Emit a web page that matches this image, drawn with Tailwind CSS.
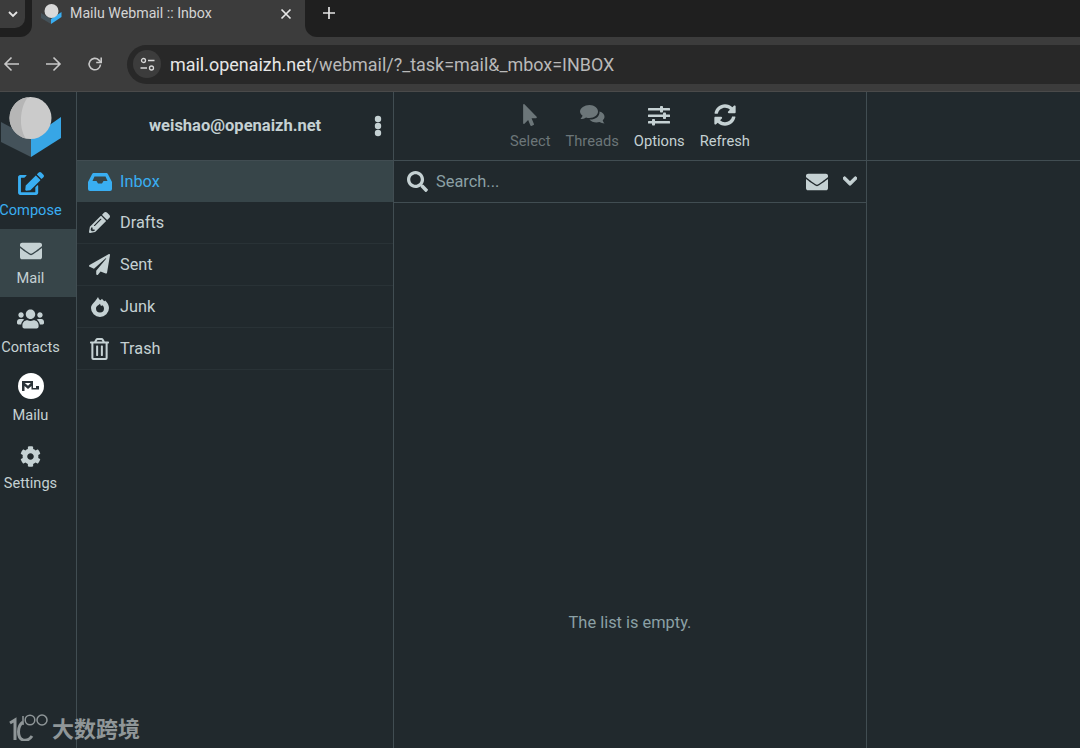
<!DOCTYPE html>
<html lang="en">
<head>
  <meta charset="UTF-8" />
  <title>Mailu Webmail :: Inbox</title>
  <script src="https://cdn.jsdelivr.net/npm/@tailwindcss/browser@4"></script>
</head>
<body class="relative w-[1080px] h-[748px] overflow-hidden bg-[#21292d] text-[#c5d1d3] font-['Roboto',sans-serif]">

  <!-- browser tabs -->
  <div class="h-[37px] bg-[#3c3c3c] flex">
    <div class="w-[32px] bg-[#1f1f1f] rounded-br-[12px]">
      <div class="w-[25px] h-[28px] bg-[#3c3c3c] rounded-br-[10px] flex items-center justify-center">
        <svg class="w-[12px] h-[12px] text-[#e3e3e3]" viewBox="0 0 12 12" fill="none" stroke="currentColor" stroke-width="1.800"><path d="M2 4l4 4 4-4"/></svg>
      </div>
    </div>
    <div class="w-[273px] flex items-center pl-[9px] pr-[13px] pb-[10px]">
      <svg class="w-[21px] h-[20px] shrink-0" viewBox="0 0 21 20">
        <path d="M0 9l10 6v5L0 14z" fill="#44525a"/>
        <path d="M20.500 8L10 15v5l10.500-7z" fill="#39aef2"/>
        <circle cx="10.500" cy="7" r="7" fill="#d9d9d9"/>
      </svg>
      <span class="ml-[8px] text-[14.2px] text-[#d4d4d4] whitespace-nowrap">Mailu Webmail :: Inbox</span>
      <svg class="ml-auto w-[12px] h-[12px] text-[#e6e6e6]" viewBox="0 0 12 12" fill="none" stroke="currentColor" stroke-width="1.700"><path d="M1.500 1.500l9 9M10.500 1.500l-9 9"/></svg>
    </div>
    <div class="flex-1 bg-[#1f1f1f] rounded-bl-[12px] pl-[18px] pt-[7px]">
      <svg class="w-[12px] h-[12px] text-[#e3e3e3]" viewBox="0 0 12 12" fill="none" stroke="currentColor" stroke-width="1.700"><path d="M6 0v12M0 6h12"/></svg>
    </div>
  </div>

  <!-- address bar -->
  <div class="h-[55px] bg-[#3c3c3c] border-b border-[#4a4a4a] flex items-center">
    <svg class="ml-[3px] w-[18px] h-[18px] text-[#c8c8c8]" viewBox="0 0 18 18" fill="none" stroke="currentColor" stroke-width="1.600"><path d="M16 9H2M8.500 2.500L2 9l6.500 6.500"/></svg>
    <svg class="ml-[23px] w-[18px] h-[18px] text-[#c8c8c8]" viewBox="0 0 18 18" fill="none" stroke="currentColor" stroke-width="1.600"><path d="M2 9h14M9.500 2.500L16 9l-6.500 6.500"/></svg>
    <svg class="ml-[25px] w-[16px] h-[16px] text-[#c8c8c8]" viewBox="0 0 16 16" fill="none" stroke="currentColor" stroke-width="1.600"><path d="M13.500 8.500a5.700 5.700 0 1 1-1.600-4.400L14 6.200"/><path d="M14.200 1.500v5h-5" /></svg>
    <div class="ml-[24px] flex-1 h-[39px] bg-[#282828] rounded-l-full flex items-center pl-[6px]">
      <div class="w-[28px] h-[28px] rounded-full bg-[#3c3c3c] flex items-center justify-center">
        <svg class="w-[15px] h-[15px] text-[#d8d8d8]" viewBox="0 0 15 15" fill="none" stroke="currentColor" stroke-width="1.300"><circle cx="3.500" cy="3.500" r="2"/><path d="M8 3.500h6.500M.5 11h6.500"/><circle cx="11.500" cy="11" r="2"/></svg>
      </div>
      <div class="ml-[9px] mt-[2px] text-[17.96px] whitespace-nowrap text-[#b9b9b9]"><span class="text-[#e6e6e6]">mail.openaizh.net</span>/webmail/?_task=mail&amp;_mbox=INBOX</div>
    </div>
  </div>

  <!-- webmail -->
  <div class="flex h-[656px]">

    <!-- task menu -->
    <div class="w-[77px] shrink-0 border-r border-[#414d52] flex flex-col text-[14.6px]">
      <div class="h-[69px] shrink-0">
        <svg class="w-[62px] h-[69px]" viewBox="0 0 62 69">
          <path d="M1 30l30 16v19L1 50z" fill="#44525a"/>
          <path d="M61 25L31 46v19l30-19z" fill="#37a6e6"/>
          <circle cx="30.500" cy="26" r="21" fill="#cbcbcb"/>
          <path d="M28 5.200a21 21 0 0 0-18.500 21 21 21 0 0 0 16 20.200c-3.500-6-5-13-4.500-20.400S23.500 10 28 5.200z" fill="#b6b6b6"/>
        </svg>
      </div>
      <div class="h-[68px] shrink-0 pr-[15px] flex flex-col items-center text-[#39aef2]">
        <svg class="mt-[11px] w-[26px] h-[23px]" viewBox="0 0 576 512" fill="currentColor"><path d="M402.6 83.2l90.2 90.2c3.8 3.8 3.8 10 0 13.8L274.4 405.6l-92.8 10.3c-12.4 1.4-22.9-9.1-21.500-21.500l10.300-92.800L388.800 83.200c3.800-3.800 10-3.800 13.800 0zm162-22.900l-48.800-48.800c-15.200-15.200-39.900-15.200-55.200 0l-35.400 35.400c-3.800 3.800-3.800 10 0 13.800l90.200 90.200c3.800 3.800 10 3.800 13.800 0l35.400-35.400c15.200-15.300 15.200-40 0-55.200zM384 346.200V448H64V128h73.900c3.200 0 6.200-1.300 8.500-3.500l40-40c7.600-7.600 2.200-20.500-8.500-20.500H48C21.500 64 0 85.500 0 112v352c0 26.500 21.500 48 48 48h352c26.500 0 48-21.500 48-48V306.200c0-10.700-12.900-16-20.500-8.500l-40 40c-2.200 2.300-3.500 5.300-3.500 8.500z"/></svg>
        <span class="mt-[7px] leading-[16px]">Compose</span>
      </div>
      <div class="h-[68px] shrink-0 pr-[15px] flex flex-col items-center bg-[#374549]">
        <svg class="mt-[11px] w-[22px] h-[22px]" viewBox="0 0 512 512" fill="currentColor"><path d="M502.300 190.800c3.900-3.100 9.700-.2 9.700 4.700V400c0 26.500-21.500 48-48 48H48c-26.500 0-48-21.500-48-48V195.600c0-5 5.700-7.800 9.700-4.700 22.400 17.400 52.100 39.500 154.100 113.600 21.100 15.400 56.700 47.800 92.200 47.600 35.700.3 72-32.800 92.300-47.600 102-74.100 131.600-96.300 154-113.700zM256 320c23.200.4 56.600-29.200 73.400-41.400 132.700-96.300 142.800-104.700 173.400-128.700 5.800-4.500 9.200-11.500 9.200-18.900v-19c0-26.500-21.500-48-48-48H48C21.500 64 0 85.500 0 112v19c0 7.400 3.400 14.300 9.200 18.900 30.600 23.900 40.700 32.400 173.400 128.700 16.800 12.200 50.200 41.800 73.400 41.400z"/></svg>
        <span class="mt-[8px] leading-[16px]">Mail</span>
      </div>
      <div class="h-[68px] shrink-0 pr-[15px] flex flex-col items-center">
        <svg class="mt-[11px] w-[27px] h-[22px]" viewBox="0 0 640 512" fill="currentColor"><path d="M96 224c35.300 0 64-28.700 64-64s-28.700-64-64-64-64 28.700-64 64 28.700 64 64 64zm448 0c35.300 0 64-28.700 64-64s-28.700-64-64-64-64 28.700-64 64 28.700 64 64 64zm32 32h-64c-17.600 0-33.500 7.100-45.100 18.600 40.300 22.100 68.900 62 75.100 109.400h66c17.700 0 32-14.300 32-32v-32c0-35.300-28.700-64-64-64zm-256 0c61.900 0 112-50.100 112-112S381.900 32 320 32 208 82.100 208 144s50.100 112 112 112zm76.800 32h-8.300c-20.800 10-43.900 16-68.500 16s-47.600-6-68.500-16h-8.300C179.600 288 128 339.600 128 403.200V432c0 26.500 21.500 48 48 48h288c26.500 0 48-21.500 48-48v-28.800c0-63.600-51.600-115.200-115.200-115.200zm-223.700-13.400C161.500 263.100 145.600 256 128 256H64c-35.300 0-64 28.700-64 64v32c0 17.700 14.300 32 32 32h65.900c6.300-47.400 34.900-87.300 75.200-109.400z"/></svg>
        <span class="mt-[9px] leading-[16px]">Contacts</span>
      </div>
      <div class="h-[69px] shrink-0 pr-[15px] flex flex-col items-center">
        <div class="mt-[8px] w-[26px] h-[26px] rounded-full bg-white flex items-center justify-center">
          <svg class="w-[17px] h-[10px]" viewBox="0 0 17 10" fill="#2b3338"><path d="M0 0h11v7h3V5h3v3.500H9.500V5L6 8 2.500 5v5H0zM2.800 2L6 4.800 8.800 2z" fill-rule="evenodd"/></svg>
        </div>
        <span class="mt-[8px] leading-[16px]">Mailu</span>
      </div>
      <div class="h-[68px] shrink-0 pr-[15px] flex flex-col items-center">
        <svg class="mt-[12px] w-[21px] h-[21px]" viewBox="0 0 512 512" fill="currentColor"><path d="M487.400 315.700l-42.600-24.600c4.300-23.200 4.300-47 0-70.200l42.600-24.600c4.900-2.800 7.100-8.600 5.500-14-11.100-35.600-30-67.800-54.700-94.600-3.800-4.100-10-5.100-14.800-2.300L380.800 110c-17.900-15.400-38.500-27.300-60.800-35.100V25.800c0-5.600-3.900-10.500-9.400-11.700-36.700-8.200-74.300-7.800-109.200 0-5.500 1.200-9.400 6.100-9.400 11.700V75c-22.200 7.900-42.800 19.800-60.800 35.100L88.700 85.500c-4.900-2.800-11-1.900-14.800 2.300-24.700 26.700-43.600 58.900-54.700 94.600-1.700 5.400.6 11.200 5.500 14L67.300 221c-4.300 23.200-4.300 47 0 70.200l-42.600 24.600c-4.900 2.800-7.100 8.600-5.500 14 11.100 35.600 30 67.800 54.700 94.600 3.800 4.100 10 5.100 14.800 2.300l42.600-24.600c17.900 15.400 38.500 27.300 60.800 35.100v49.200c0 5.600 3.900 10.500 9.400 11.700 36.700 8.200 74.300 7.800 109.200 0 5.500-1.200 9.400-6.100 9.400-11.700v-49.200c22.200-7.900 42.800-19.800 60.800-35.100l42.600 24.600c4.900 2.800 11 1.900 14.800-2.300 24.700-26.700 43.600-58.900 54.700-94.600 1.500-5.500-.7-11.300-5.600-14.100zM256 336c-44.100 0-80-35.900-80-80s35.900-80 80-80 80 35.900 80 80-35.900 80-80 80z"/></svg>
        <span class="mt-[8px] leading-[16px]">Settings</span>
      </div>
    </div>

    <!-- folders -->
    <div class="w-[317px] shrink-0 border-r border-[#414d52] flex flex-col text-[16.3px]">
      <div class="h-[69px] shrink-0 border-b border-[#414d52] flex items-center justify-between pl-[72px] pr-[11px]">
        <span class="font-bold text-[16.5px]">weishao@openaizh.net</span>
        <svg class="w-[8px] h-[22px]" viewBox="0 0 8 22" fill="currentColor"><circle cx="4" cy="4" r="3.200"/><circle cx="4" cy="11" r="3.200"/><circle cx="4" cy="18" r="3.200"/></svg>
      </div>
      <div class="h-[41px] shrink-0 bg-[#374549] flex items-center pl-[11px] text-[#39aef2]">
        <svg class="w-[24px] h-[18px]" viewBox="0 0 24 18" fill="currentColor"><path fill-rule="evenodd" d="M6 0h12c1 0 1.600.5 2 1.300L24 9v7a2 2 0 0 1-2 2H2a2 2 0 0 1-2-2V9l4-7.700C4.400.5 5 0 6 0zM6.500 3.500L4.500 8H8.500l1.500 2.500h4L15.500 8h4l-2-4.500z"/></svg>
        <span class="ml-[8px] mt-[2px]">Inbox</span>
      </div>
      <div class="h-[42px] shrink-0 border-b border-[#293236] flex items-center pl-[12px]">
        <svg class="w-[21px] h-[21px]" viewBox="0 0 512 512" fill="currentColor"><path d="M497.900 142.100l-46.100 46.100c-4.700 4.700-12.300 4.700-17 0l-111-111c-4.700-4.700-4.700-12.300 0-17l46.100-46.100c18.700-18.700 49.100-18.700 67.900 0l60.100 60.100c18.800 18.700 18.800 49.100 0 67.900zM284.200 99.800L21.600 362.400.4 483.900c-2.900 16.400 11.400 30.600 27.800 27.800l121.500-21.300 262.600-262.600c4.700-4.700 4.700-12.300 0-17l-111-111c-4.800-4.700-12.400-4.700-17.100 0zM124.100 339.900c-5.500-5.500-5.500-14.300 0-19.800l154-154c5.500-5.500 14.300-5.500 19.800 0s5.500 14.300 0 19.800l-154 154c-5.500 5.500-14.300 5.500-19.800 0zM88 424h48v36.300l-64.500 11.300-31.100-31.100L51.700 376H88v48z"/></svg>
        <span class="ml-[10px] mt-[2px]">Drafts</span>
      </div>
      <div class="h-[42px] shrink-0 border-b border-[#293236] flex items-center pl-[12px]">
        <svg class="w-[21px] h-[21px]" viewBox="0 0 512 512" fill="currentColor"><path d="M476 3.200L12.500 270.600c-18.100 10.400-15.800 35.600 2.200 43.200L121 358.400l287.300-253.200c5.500-4.900 13.300 2.600 8.600 8.300L176 407v80.500c0 23.600 28.500 32.900 42.500 15.800L282 426l124.600 52.200c14.200 6 30.400-2.900 33-18.200l72-432C515 7.800 493.300-6.800 476 3.200z"/></svg>
        <span class="ml-[10px] mt-[2px]">Sent</span>
      </div>
      <div class="h-[42px] shrink-0 border-b border-[#293236] flex items-center pl-[14px]">
        <svg class="w-[18px] h-[20px]" viewBox="0 0 18 20" fill="currentColor"><path fill-rule="evenodd" d="M7 0c.5 1.600 1.300 2.500 2.500 3.200.6-.4 1-.9 1.500-1.400.5 1 1.300 1.800 2.300 2.400.3-.2.600-.5.900-.8C16.500 5.500 18 8 18 11a9 9 0 0 1-18 0C0 7 4.800 4.500 7 0zM9 6.800C8.500 7.800 5 8.600 5 11.500a4 4 0 0 0 8 0c0-1.500-.8-2.600-1.800-3.300-.4.400-.8.700-1.200.8-.4-.6-.7-1.300-1-2.200z"/></svg>
        <span class="ml-[11px] mt-[2px]">Junk</span>
      </div>
      <div class="h-[42px] shrink-0 border-b border-[#293236] flex items-center pl-[13px]">
        <svg class="w-[19px] h-[22px]" viewBox="0 0 448 512" fill="currentColor" preserveAspectRatio="none"><path d="M268 416h24a12 12 0 0 0 12-12V188a12 12 0 0 0-12-12h-24a12 12 0 0 0-12 12v216a12 12 0 0 0 12 12zM432 80h-82.410l-34-56.700A48 48 0 0 0 274.410 0H173.590a48 48 0 0 0-41.160 23.300L98.410 80H16A16 16 0 0 0 0 96v16a16 16 0 0 0 16 16h16v336a48 48 0 0 0 48 48h288a48 48 0 0 0 48-48V128h16a16 16 0 0 0 16-16V96a16 16 0 0 0-16-16zM171.840 50.910A6 6 0 0 1 177 48h94a6 6 0 0 1 5.150 2.910L293.610 80H154.390zM368 464H80V128h288zm-212-48h24a12 12 0 0 0 12-12V188a12 12 0 0 0-12-12h-24a12 12 0 0 0-12 12v216a12 12 0 0 0 12 12z"/></svg>
        <span class="ml-[11px] mt-[2px]">Trash</span>
      </div>
    </div>

    <!-- message list -->
    <div class="w-[473px] shrink-0 border-r border-[#414d52] flex flex-col">
      <div class="h-[69px] shrink-0 border-b border-[#414d52] flex justify-center text-[14.7px]">
        <div class="flex gap-[15px]">
          <div class="flex flex-col items-center text-[#6c7679]">
            <div class="mt-[11px] h-[24px] flex items-center"><svg class="w-[14px] h-[22px]" viewBox="0 0 320 512" fill="currentColor"><path d="M302.189 329.126H196.105l55.831 135.993c3.889 9.428-.555 19.999-9.444 23.999l-49.165 21.427c-9.165 4-19.443-.571-23.332-9.714l-53.053-129.136-86.664 89.138C18.729 472.710 0 463.554 0 447.977V18.299C0 1.899 19.921-6.096 30.277 5.443l284.412 292.542c11.472 11.179 3.007 31.141-12.500 31.141z"/></svg></div>
            <span class="mt-[6px] leading-[16px]">Select</span>
          </div>
          <div class="flex flex-col items-center text-[#6c7679]">
            <div class="mt-[11px] h-[24px] flex items-center"><svg class="w-[25px] h-[21px]" viewBox="0 0 25 21" fill="currentColor"><path d="M9.500 0C14.500 0 18 3 18 6.500S14.500 13 9.500 13c-1.200 0-2.400-.2-3.500-.6C4.500 13.500 2.500 14 .5 14c1-1 1.800-2.200 2-3.400C1 9.400 0 8 0 6.500 0 3 4.500 0 9.500 0z"/><path d="M19.500 6.500c3 .8 5 2.800 5 5.200 0 1.400-.7 2.600-1.800 3.600.2 1.200.9 2.200 1.800 3.200-1.800 0-3.500-.5-5-1.400-1 .3-2 .5-3 .5-3 0-5.500-1.200-7-3 5.500.3 10.500-3 10-8.100z"/></svg></div>
            <span class="mt-[6px] leading-[16px]">Threads</span>
          </div>
          <div class="flex flex-col items-center">
            <div class="mt-[11px] h-[24px] flex items-center"><svg class="w-[22px] h-[21px]" viewBox="0 0 22 21" fill="currentColor"><rect x="0" y="3" width="22" height="2.500" rx=".5"/><rect x="0" y="9.500" width="22" height="2.500" rx=".5"/><rect x="0" y="16" width="22" height="2.500" rx=".5"/><rect x="12" y="1" width="3" height="6.500" rx=".8"/><rect x="15" y="7.500" width="3" height="6.500" rx=".8"/><rect x="4" y="14" width="3" height="6.500" rx=".8"/></svg></div>
            <span class="mt-[6px] leading-[16px]">Options</span>
          </div>
          <div class="flex flex-col items-center">
            <div class="mt-[11px] h-[24px] flex items-center"><svg class="w-[22px] h-[22px]" viewBox="0 0 512 512" fill="currentColor"><path d="M370.720 133.280C339.458 104.008 298.888 87.962 255.848 88c-77.458.068-144.328 53.178-162.791 126.850-1.344 5.363-6.122 9.150-11.651 9.150H24.103c-7.498 0-13.194-6.807-11.807-14.176C33.933 94.924 134.813 8 256 8c66.448 0 126.791 26.136 171.315 68.685L463.030 40.970C478.149 25.851 504 36.559 504 57.941V192c0 13.255-10.745 24-24 24H345.941c-21.382 0-32.090-25.851-16.971-40.971l41.750-41.749zM32 296h134.059c21.382 0 32.090 25.851 16.971 40.971l-41.750 41.750c31.262 29.273 71.835 45.319 114.876 45.280 77.418-.07 144.315-53.144 162.787-126.849 1.344-5.363 6.122-9.150 11.651-9.150h57.304c7.498 0 13.194 6.807 11.807 14.176C478.067 417.076 377.187 504 256 504c-66.448 0-126.791-26.136-171.315-68.685L48.970 471.030C33.851 486.149 8 475.441 8 454.059V320c0-13.255 10.745-24 24-24z"/></svg></div>
            <span class="mt-[6px] leading-[16px]">Refresh</span>
          </div>
        </div>
      </div>
      <div class="h-[42px] shrink-0 border-b border-[#414d52] flex items-center pl-[13px] pr-[9px]">
        <svg class="w-[21px] h-[21px]" viewBox="0 0 512 512" fill="currentColor"><path d="M505 442.700L405.300 343c-4.500-4.500-10.600-7-17-7H372c27.600-35.300 44-79.700 44-128C416 93.100 322.900 0 208 0S0 93.100 0 208s93.100 208 208 208c48.300 0 92.700-16.400 128-44v16.300c0 6.400 2.500 12.500 7 17l99.700 99.700c9.400 9.400 24.600 9.400 33.900 0l28.300-28.300c9.400-9.400 9.400-24.600.1-34zM208 336c-70.700 0-128-57.200-128-128 0-70.700 57.200-128 128-128 70.700 0 128 57.200 128 128 0 70.700-57.200 128-128 128z"/></svg>
        <span class="ml-[8px] mt-[2px] text-[16.4px] text-[#8ba0a5]">Search...</span>
        <svg class="ml-auto w-[22px] h-[22px]" viewBox="0 0 512 512" fill="currentColor"><path d="M502.300 190.800c3.900-3.100 9.700-.2 9.700 4.700V400c0 26.500-21.500 48-48 48H48c-26.500 0-48-21.500-48-48V195.600c0-5 5.700-7.800 9.700-4.700 22.400 17.400 52.100 39.500 154.100 113.600 21.100 15.400 56.700 47.800 92.200 47.600 35.700.3 72-32.800 92.300-47.600 102-74.100 131.600-96.300 154-113.700zM256 320c23.200.4 56.600-29.200 73.400-41.400 132.700-96.300 142.800-104.700 173.400-128.700 5.800-4.500 9.200-11.500 9.200-18.900v-19c0-26.500-21.500-48-48-48H48C21.500 64 0 85.500 0 112v19c0 7.400 3.400 14.300 9.200 18.900 30.600 23.900 40.700 32.400 173.400 128.700 16.800 12.200 50.200 41.800 73.400 41.400z"/></svg>
        <svg class="ml-[15px] mb-[2px] w-[14px] h-[16px]" viewBox="0 0 448 512" fill="currentColor" stroke="currentColor" stroke-width="35"><path d="M207.029 381.476L12.686 187.132c-9.373-9.373-9.373-24.569 0-33.941l22.667-22.667c9.357-9.357 24.522-9.375 33.901-.04L224 284.505l154.745-154.021c9.379-9.335 24.544-9.317 33.901.04l22.667 22.667c9.373 9.373 9.373 24.569 0 33.941L240.971 381.476c-9.373 9.372-24.569 9.372-33.942 0z"/></svg>
      </div>
      <div class="flex-1 pt-[410px] text-center text-[16.4px] leading-[20px] text-[#8ba0a5]">The list is empty.</div>
    </div>

    <!-- content -->
    <div class="flex-1">
      <div class="h-[69px] border-b border-[#414d52]"></div>
    </div>
  </div>

  <!-- watermark -->
  <div class="absolute left-[9px] top-[713px] flex items-center text-[#8f9698]">
    <svg class="w-[40px] h-[28px]" viewBox="0 0 40 28" fill="none" stroke="currentColor">
      <path d="M1 10l5-3v20" stroke-width="3"/>
      <path d="M14 9C8 13 8 25 14 27c4 1 7-1 9-4" stroke-width="3"/>
      <path d="M14 3v9" stroke-width="1.500"/>
      <circle cx="21" cy="7" r="4.800" stroke-width="1.500"/>
      <circle cx="33" cy="7" r="5" stroke-width="1.500"/>
    </svg>
    <span class="ml-[3px] text-[22px] font-bold leading-[28px] font-['Noto_Sans_CJK_SC','Noto_Sans',sans-serif]">大数跨境</span>
  </div>
</body>
</html>
